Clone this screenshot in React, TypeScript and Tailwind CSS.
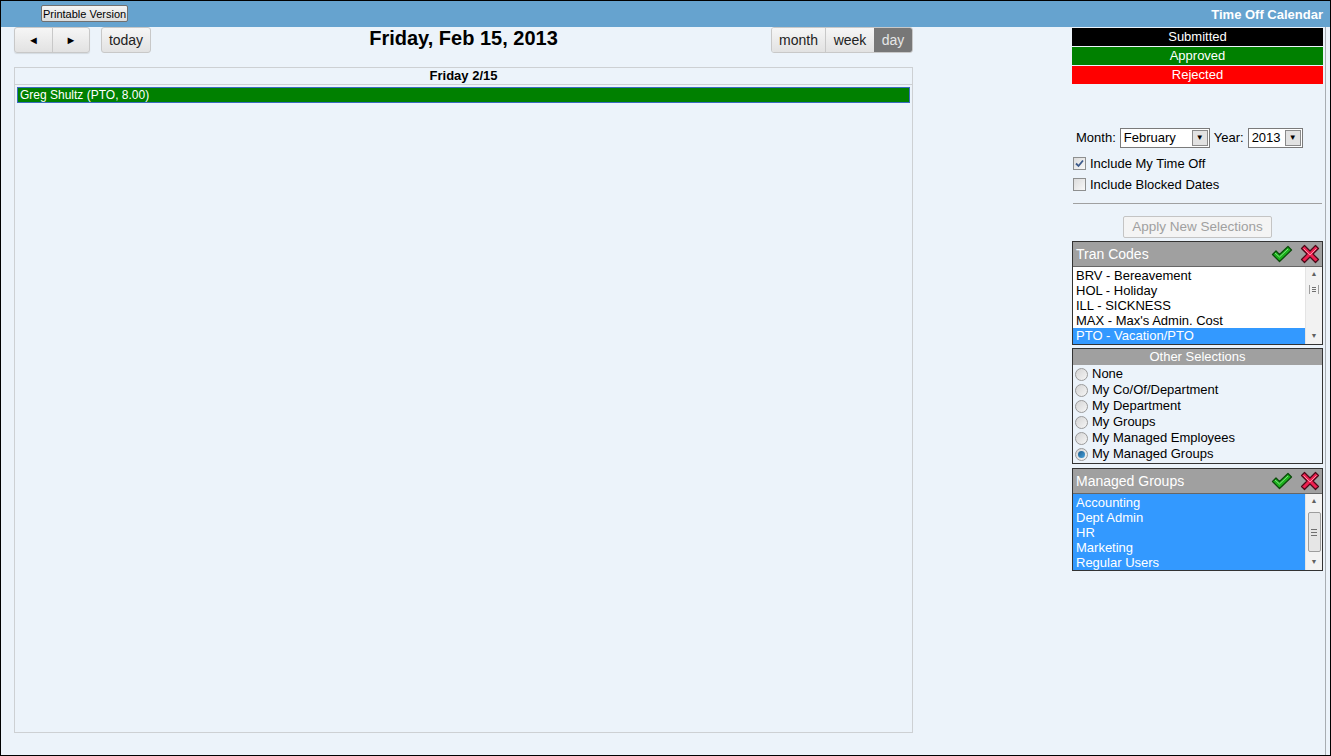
import React from "react";

const font = { fontFamily: '"Liberation Sans", Arial, sans-serif' };

function CheckIcon() {
  return (
    <svg width="22" height="18" viewBox="0 0 22 18">
      <path d="M1.5 9.5 L5 6 L8.5 9.5 L17 1.5 L20.5 5 L8.5 16.5 Z" fill="#1db31d" stroke="#0b4a0b" strokeWidth="1.3" strokeLinejoin="round" />
      <path d="M4 8 L8.5 12 L17 4" fill="none" stroke="#7fe07f" strokeWidth="1" />
    </svg>
  );
}

function XIcon() {
  return (
    <svg width="20" height="20" viewBox="0 0 20 20">
      <path d="M1.5 4.5 L4.5 1.5 L10 7 L15.5 1.5 L18.5 4.5 L13 10 L18.5 15.5 L15.5 18.5 L10 13 L4.5 18.5 L1.5 15.5 L7 10 Z" fill="#ee2050" stroke="#4a0a18" strokeWidth="1.2" strokeLinejoin="round" />
      <path d="M3.5 4.5 L10 11 L16.5 4.5" fill="none" stroke="#ff8fa8" strokeWidth="1" />
    </svg>
  );
}

function Scrollbar({ thumb }: { thumb?: boolean }) {
  return (
    <div className="flex w-[17px] shrink-0 flex-col items-center bg-[#f2f2f2] border-l border-[#e4e4e4]">
      <div className="flex h-[15px] items-center justify-center text-[7px] text-[#606060]">▲</div>
      <div className="flex flex-1 w-full items-start justify-center">
        {thumb ? (
          <div className="mt-[3px] flex h-[40px] w-[13px] items-center justify-center rounded-[2px] border border-[#9d9d9d] bg-[#e6e6e6]">
            <div className="flex flex-col gap-[2px]">
              <div className="h-px w-[6px] bg-[#707070]" />
              <div className="h-px w-[6px] bg-[#707070]" />
              <div className="h-px w-[6px] bg-[#707070]" />
            </div>
          </div>
        ) : (
          <div className="mt-[2px] flex h-[10px] w-[13px] items-center justify-center">
            <div className="flex h-[9px] w-[10px] flex-col justify-center gap-[1px] border-x border-[#9d9d9d] px-[2px]">
              <div className="h-px w-full bg-[#707070]" />
              <div className="h-px w-full bg-[#707070]" />
              <div className="h-px w-full bg-[#707070]" />
            </div>
          </div>
        )}
      </div>
      <div className="flex h-[15px] items-center justify-center text-[7px] text-[#606060]">▼</div>
    </div>
  );
}

function Select({ value, width }: { value: string; width: string }) {
  return (
    <div className={`flex h-[20px] items-stretch border border-[#7a7a7a] bg-white ${width}`}>
      <div className="flex flex-1 items-center pl-[3px] text-[13px] text-black">{value}</div>
      <div className="m-px flex w-[16px] items-center justify-center border border-[#8a8a8a] bg-[#e2e2e2] text-[8px] text-black">▼</div>
    </div>
  );
}

function Checkbox({ checked }: { checked?: boolean }) {
  return (
    <div className="flex h-[13px] w-[13px] items-center justify-center border border-[#8e8f8f] bg-gradient-to-br from-[#dcdcdc] to-[#f8f8f8]">
      {checked && (
        <svg width="9" height="9" viewBox="0 0 9 9">
          <path d="M1 4.5 L3.5 7 L8 1.5" fill="none" stroke="#3d5a8a" strokeWidth="1.8" />
        </svg>
      )}
    </div>
  );
}

function Radio({ checked }: { checked?: boolean }) {
  return (
    <div className="flex h-[13px] w-[13px] items-center justify-center rounded-full border border-[#9a9a9a] bg-gradient-to-br from-[#d4d4d4] to-[#f6f6f6]">
      {checked && <div className="h-[7px] w-[7px] rounded-full bg-gradient-to-br from-[#1c5c8c] to-[#49a3dd]" />}
    </div>
  );
}

const tranCodes = ["BRV - Bereavement", "HOL - Holiday", "ILL - SICKNESS", "MAX - Max's Admin. Cost", "PTO - Vacation/PTO"];
const otherSelections = ["None", "My Co/Of/Department", "My Department", "My Groups", "My Managed Employees", "My Managed Groups"];
const groups = ["Accounting", "Dept Admin", "HR", "Marketing", "Regular Users"];

export default function App() {
  return (
    <div style={font} className="flex h-[756px] w-[1331px] flex-col overflow-hidden border border-black bg-[#ecf3fa]">
      {/* top bar */}
      <div className="flex h-[26px] shrink-0 items-start justify-between bg-[#66a3cf] pr-[7px]">
        <button className="ml-[40px] mt-[4px] h-[17px] rounded-[2px] border border-[#707070] bg-gradient-to-b from-[#f4f4f4] to-[#dcdcdc] px-px text-[11px] leading-[14px] text-black">
          Printable Version
        </button>
        <div className="mt-[4px] text-[13px] font-bold text-white">Time Off Calendar</div>
      </div>

      <div className="flex flex-1">
        {/* calendar column */}
        <div className="ml-[13px] flex w-[899px] flex-col">
          <div className="grid h-[26px] grid-cols-[1fr_auto_1fr] items-start">
            <div className="flex items-center">
              <div className="flex h-[26px] overflow-hidden rounded-[3px] border border-[#c8c8c8] bg-gradient-to-b from-[#f6f6f6] to-[#e2e2e2] shadow-[0_1px_1px_rgba(0,0,0,0.1)]">
                <div className="flex w-[37px] items-center justify-center text-[11px] text-black">◄</div>
                <div className="flex w-[37px] items-center justify-center border-l border-[#c8c8c8] text-[11px] text-black">►</div>
              </div>
              <div className="ml-[11px] flex h-[26px] w-[50px] items-center justify-center rounded-[3px] border border-[#c8c8c8] bg-gradient-to-b from-[#f6f6f6] to-[#e2e2e2] text-[14px] text-[#222]">
                today
              </div>
            </div>
            <div className="text-[20px] font-bold leading-[22px] text-black">Friday, Feb 15, 2013</div>
            <div className="flex justify-end">
              <div className="flex h-[26px] overflow-hidden rounded-[3px] border border-[#c8c8c8] text-[14px]">
                <div className="flex w-[53px] items-center justify-center bg-gradient-to-b from-[#f6f6f6] to-[#e2e2e2] text-[#222]">month</div>
                <div className="flex w-[49px] items-center justify-center border-l border-[#c8c8c8] bg-gradient-to-b from-[#f6f6f6] to-[#e2e2e2] text-[#222]">week</div>
                <div className="flex w-[38px] items-center justify-center bg-[#777777] text-[#e6e6e6]">day</div>
              </div>
            </div>
          </div>

          <div className="mt-[14px] flex h-[666px] flex-col border border-[#cdd0d3]">
            <div className="flex h-[17px] items-center justify-center border-b border-[#cdd0d3] text-[13px] font-bold text-black">
              Friday 2/15
            </div>
            <div className="mx-[2px] mt-[2px] flex h-[16px] items-center border border-[#3a6bbf] bg-[#008000] pl-[2px] text-[12px] text-white">
              Greg Shultz (PTO, 8.00)
            </div>
          </div>
        </div>

        {/* right panel */}
        <div className="ml-[159px] flex w-[254px] flex-col border-r border-[#a8adb2] pr-[2px]">
          <div className="flex flex-col gap-[1px] pt-[1px] text-[13px] text-white">
            <div className="flex h-[18px] items-center justify-center bg-black">Submitted</div>
            <div className="flex h-[18px] items-center justify-center bg-[#008000]">Approved</div>
            <div className="flex h-[18px] items-center justify-center bg-[#ff0000]">Rejected</div>
          </div>

          <div className="mt-[44px] flex items-center gap-[4px] pl-[4px] text-[13px] text-black">
            <span>Month:</span>
            <Select value="February" width="w-[90px]" />
            <span>Year:</span>
            <Select value="2013" width="w-[55px]" />
          </div>

          <div className="mt-[8px] flex h-[15px] items-center gap-[4px] pl-[1px] text-[13px] text-black">
            <Checkbox checked />
            <span>Include My Time Off</span>
          </div>
          <div className="mt-[6px] flex h-[15px] items-center gap-[4px] pl-[1px] text-[13px] text-black">
            <Checkbox />
            <span>Include Blocked Dates</span>
          </div>

          <div className="mx-[1px] mt-[11px] h-[2px] border-t border-[#a0a0a0] border-b-white" />

          <div className="mt-[11px] flex justify-center">
            <div className="flex h-[22px] w-[149px] items-center justify-center rounded-[2px] border border-[#c4c4c4] bg-[#f4f4f4] text-[13.5px] text-[#a0a0a0]">
              Apply New Selections
            </div>
          </div>

          {/* Tran Codes */}
          <div className="mt-[3px] flex h-[104px] flex-col border border-[#333]">
            <div className="flex h-[24px] items-center justify-between bg-[#a0a0a0] pl-[3px] pr-[2px]">
              <span className="text-[14px] text-white">Tran Codes</span>
              <div className="flex items-center gap-[7px]">
                <CheckIcon />
                <XIcon />
              </div>
            </div>
            <div className="flex flex-1 border-t border-[#666] bg-white">
              <div className="flex flex-1 flex-col pt-[1px] text-[13px] leading-[15px] text-black">
                {tranCodes.map((c, i) => (
                  <div key={c} className={i === 4 ? "h-[16px] bg-[#3399ff] pl-[3px] text-white" : "h-[15px] pl-[3px]"}>
                    {c}
                  </div>
                ))}
              </div>
              <Scrollbar />
            </div>
          </div>

          {/* Other Selections */}
          <div className="mt-[3px] flex h-[116px] flex-col border border-[#333]">
            <div className="flex h-[16px] items-center justify-center bg-[#a0a0a0] text-[13px] text-white">Other Selections</div>
            <div className="flex flex-col pt-[1px] text-[13px] text-black">
              {otherSelections.map((s, i) => (
                <div key={s} className="flex h-[16px] items-center gap-[4px] pl-[2px]">
                  <Radio checked={i === 5} />
                  <span>{s}</span>
                </div>
              ))}
            </div>
          </div>

          {/* Managed Groups */}
          <div className="mt-[4px] flex h-[103px] flex-col border border-[#333]">
            <div className="flex h-[24px] items-center justify-between bg-[#a0a0a0] pl-[3px] pr-[2px]">
              <span className="text-[14px] text-white">Managed Groups</span>
              <div className="flex items-center gap-[7px]">
                <CheckIcon />
                <XIcon />
              </div>
            </div>
            <div className="flex flex-1 border-t border-[#666] bg-[#3399ff]">
              <div className="flex flex-1 flex-col pt-[1px] text-[13px] leading-[15px] text-white">
                {groups.map((g) => (
                  <div key={g} className="h-[15px] pl-[3px]">
                    {g}
                  </div>
                ))}
              </div>
              <Scrollbar thumb />
            </div>
          </div>
        </div>
      </div>
    </div>
  );
}
